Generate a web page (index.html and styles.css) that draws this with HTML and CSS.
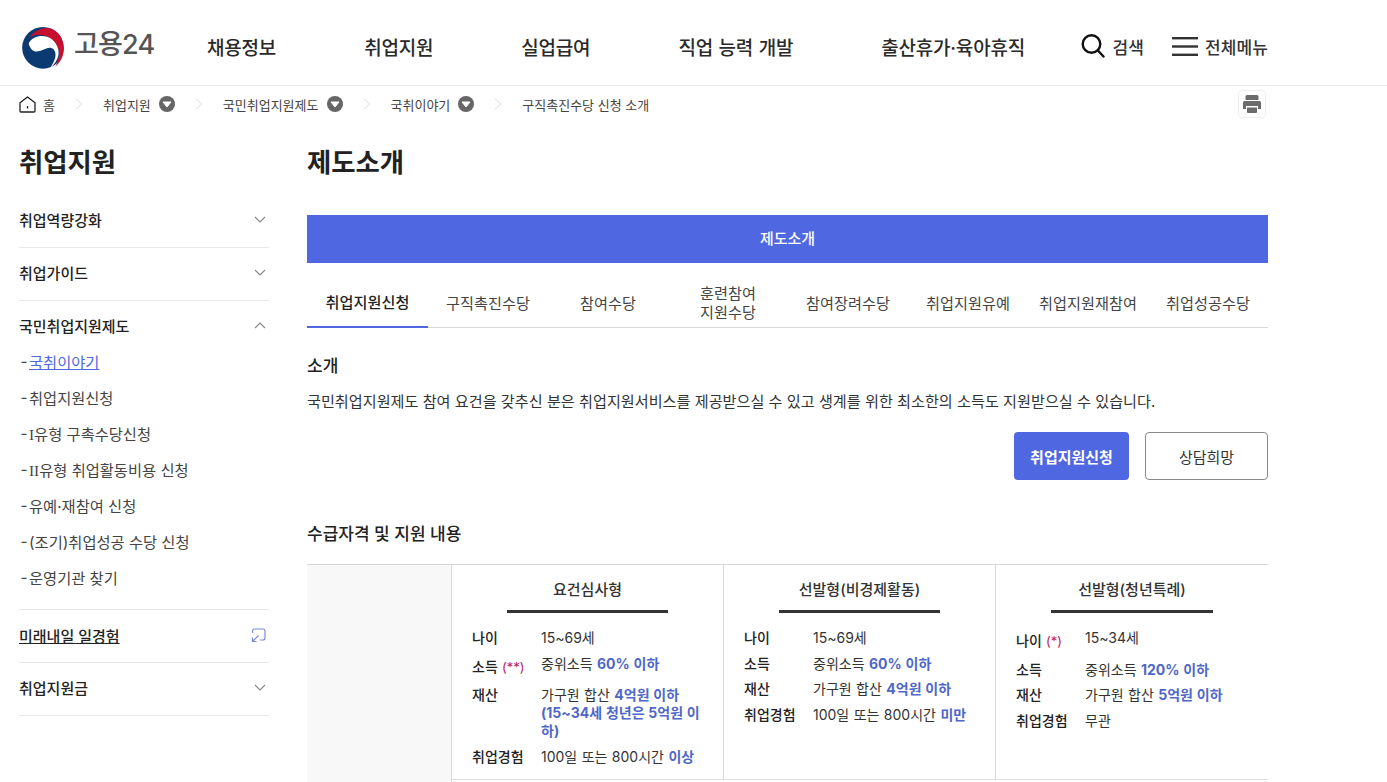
FILE: index.html
```html
<!DOCTYPE html>
<html lang="ko">
<head>
<meta charset="utf-8">
<title>제도소개 - 고용24</title>
<link rel="stylesheet" href="styles.css">
</head>
<body>
<header class="header">
  <a class="logo">
    <svg class="logo-mark" viewBox="22 23 126 127" width="42" height="42">
      <circle cx="85" cy="86" r="63" fill="#0b3a72"/>
      <path d="M112 26C136 36 148 62 148 88C148 112 134 136 108 148L150 150V26Z" fill="#fff"/>
      <path d="M44 54C62 32 88 23 106 27C132 35 148 60 148 88C148 110 138 130 122 143C134 122 138 100 128 80C114 52 75 36 44 54Z" fill="#c8102e"/>
      <path d="M42 72C55 48 90 44 112 60C130 75 138 100 128 120C122 132 116 140 107 146C122 125 128 105 118 92C108 80 95 88 85 92C72 98 58 100 50 90C46 84 42 78 42 72Z" fill="#fff"/>
    </svg>
    <span class="logo-text">고용24</span>
  </a>
  <nav class="gnb">
    <a>채용정보</a><a>취업지원</a><a>실업급여</a><a>직업 능력 개발</a><a>출산휴가·육아휴직</a>
  </nav>
  <div class="util">
    <a class="util-link search-link">
      <svg width="24" height="24" viewBox="0 0 24 24" fill="none" stroke="#111" stroke-width="2.400"><circle cx="10.500" cy="10" r="8.800"/><path d="M17 16.500L22.500 22.500" stroke-linecap="round"/></svg>
      <span>검색</span>
    </a>
    <a class="util-link menu-link">
      <svg width="26" height="19" viewBox="0 0 26 19" fill="#333"><rect y="0" width="26" height="2.400"/><rect y="8.300" width="26" height="2.400"/><rect y="16.600" width="26" height="2.400"/></svg>
      <span>전체메뉴</span>
    </a>
  </div>
</header>

<div class="crumbs">
  <svg class="home" width="17" height="17" viewBox="0 0 17 17" fill="none" stroke="#222" stroke-width="1.300"><path d="M1 6.800L8.500 1L16 6.800V15a1 1 0 0 1-1 1H2a1 1 0 0 1-1-1Z" stroke-linejoin="round"/><path d="M8.500 10v2.500"/></svg>
  <span class="crumb home-label">홈</span>
  <svg class="sep" width="8" height="12" viewBox="0 0 8 12" fill="none" stroke="#ddd"><path d="M1 1l6 5-6 5"/></svg>
  <span class="crumb">취업지원</span>
  <svg class="drop" width="16" height="16" viewBox="0 0 16 16"><circle cx="8" cy="8" r="8" fill="#666"/><path d="M4 6h8l-4 5z" fill="#fff" stroke="#fff" stroke-linejoin="round"/></svg>
  <svg class="sep" width="8" height="12" viewBox="0 0 8 12" fill="none" stroke="#ddd"><path d="M1 1l6 5-6 5"/></svg>
  <span class="crumb">국민취업지원제도</span>
  <svg class="drop" width="16" height="16" viewBox="0 0 16 16"><circle cx="8" cy="8" r="8" fill="#666"/><path d="M4 6h8l-4 5z" fill="#fff" stroke="#fff" stroke-linejoin="round"/></svg>
  <svg class="sep" width="8" height="12" viewBox="0 0 8 12" fill="none" stroke="#ddd"><path d="M1 1l6 5-6 5"/></svg>
  <span class="crumb">국취이야기</span>
  <svg class="drop" width="16" height="16" viewBox="0 0 16 16"><circle cx="8" cy="8" r="8" fill="#666"/><path d="M4 6h8l-4 5z" fill="#fff" stroke="#fff" stroke-linejoin="round"/></svg>
  <svg class="sep" width="8" height="12" viewBox="0 0 8 12" fill="none" stroke="#ddd"><path d="M1 1l6 5-6 5"/></svg>
  <span class="crumb">구직촉진수당 신청 소개</span>
  <button class="print" aria-label="인쇄">
    <svg width="20" height="20" viewBox="0 0 20 20" fill="#6b6b6b"><path d="M5 1h10a1.500 1.500 0 0 1 1.500 1.500V6h-13V2.500A1.500 1.500 0 0 1 5 1Z"/><path d="M2.500 7h15A1.500 1.500 0 0 1 19 8.500V15h-3v-3H4v3H1V8.500A1.500 1.500 0 0 1 2.500 7Z"/><path d="M5 13.500h10V18a1 1 0 0 1-1 1H6a1 1 0 0 1-1-1Z"/></svg>
  </button>
</div>

<div class="layout">
  <aside class="side">
    <h2 class="side-title">취업지원</h2>
    <div class="side-group"><b>취업역량강화</b><svg class="chev" width="12" height="7" viewBox="0 0 12 7" fill="none" stroke="#888" stroke-width="1.200"><path d="M1 1l5 5 5-5"/></svg></div>
    <div class="side-group"><b>취업가이드</b><svg class="chev" width="12" height="7" viewBox="0 0 12 7" fill="none" stroke="#888" stroke-width="1.200"><path d="M1 1l5 5 5-5"/></svg></div>
    <div class="side-open">
      <div class="side-group plain"><b>국민취업지원제도</b><svg class="chev" width="12" height="7" viewBox="0 0 12 7" fill="none" stroke="#888" stroke-width="1.200"><path d="M1 6l5-5 5 5"/></svg></div>
      <ul class="sub">
        <li><a class="current">국취이야기</a></li>
        <li><a>취업지원신청</a></li>
        <li><a><span class="numeral">I</span>유형 구촉수당신청</a></li>
        <li><a><span class="numeral">II</span>유형 취업활동비용 신청</a></li>
        <li><a>유예·재참여 신청</a></li>
        <li><a>(조기)취업성공 수당 신청</a></li>
        <li><a>운영기관 찾기</a></li>
      </ul>
    </div>
    <div class="side-group low"><b class="ul">미래내일 일경험</b><svg class="ext" width="15" height="15" viewBox="0 0 15 15" fill="none" stroke="#7f88d8" stroke-width="1.200"><path d="M1.500 5V3a2 2 0 0 1 2-2h8.500a2 2 0 0 1 2 2v7a2 2 0 0 1-2 2H9"/><path d="M7.500 7.500L1.500 13.500M1.500 9.500v4h4"/></svg></div>
    <div class="side-group last"><b>취업지원금</b><svg class="chev" width="12" height="7" viewBox="0 0 12 7" fill="none" stroke="#888" stroke-width="1.200"><path d="M1 1l5 5 5-5"/></svg></div>
  </aside>

  <main class="main">
    <h1 class="page-title">제도소개</h1>
    <div class="banner">제도소개</div>
    <div class="tabs">
      <a class="tab active">취업지원신청</a>
      <a class="tab">구직촉진수당</a>
      <a class="tab">참여수당</a>
      <a class="tab">훈련참여<br>지원수당</a>
      <a class="tab">참여장려수당</a>
      <a class="tab">취업지원유예</a>
      <a class="tab">취업지원재참여</a>
      <a class="tab">취업성공수당</a>
    </div>
    <h3 class="sec-title intro">소개</h3>
    <p class="lead">국민취업지원제도 참여 요건을 갖추신 분은 취업지원서비스를 제공받으실 수 있고 생계를 위한 최소한의 소득도 지원받으실 수 있습니다.</p>
    <div class="actions">
      <a class="btn primary">취업지원신청</a>
      <a class="btn outline">상담희망</a>
    </div>
    <h3 class="sec-title qualify">수급자격 및 지원 내용</h3>
    <div class="table">
      <div class="cell blank"></div>
      <div class="cell">
        <div class="col-head">요건심사형</div>
        <dl class="facts">
          <dt>나이</dt><dd>15~69세</dd>
          <dt class="tall">소득 <em>(**)</em></dt><dd>중위소득 <strong>60% 이하</strong></dd>
          <dt>재산</dt><dd>가구원 합산 <strong>4억원 이하<br>(15~34세 청년은 5억원 이하)</strong></dd>
          <dt>취업경험</dt><dd>100일 또는 800시간 <strong>이상</strong></dd>
        </dl>
      </div>
      <div class="cell">
        <div class="col-head">선발형(비경제활동)</div>
        <dl class="facts">
          <dt>나이</dt><dd>15~69세</dd>
          <dt>소득</dt><dd>중위소득 <strong>60% 이하</strong></dd>
          <dt>재산</dt><dd>가구원 합산 <strong>4억원 이하</strong></dd>
          <dt>취업경험</dt><dd>100일 또는 800시간 <strong>미만</strong></dd>
        </dl>
      </div>
      <div class="cell">
        <div class="col-head">선발형(청년특례)</div>
        <dl class="facts">
          <dt class="tall">나이 <em>(*)</em></dt><dd>15~34세</dd>
          <dt>소득</dt><dd>중위소득 <strong>120% 이하</strong></dd>
          <dt>재산</dt><dd>가구원 합산 <strong>5억원 이하</strong></dd>
          <dt>취업경험</dt><dd>무관</dd>
        </dl>
      </div>
    </div>
  </main>
</div>
</body>
</html>
```

FILE: styles.css
```css
* { box-sizing: border-box; }
html, body { margin: 0; height: 782px; overflow: hidden; background: #fff; }
body { font-family: Inter, "Noto Sans CJK KR", "Noto Sans", sans-serif; color: #222; font-size: 14px; }
a { color: inherit; text-decoration: none; }

.header { height: 86px; border-bottom: 1px solid #e8e8e8; padding: 7px 119px 0 22px; display: flex; align-items: center; }
.logo { display: flex; align-items: center; gap: 10px; width: 185px; }
.logo-mark { display: block; margin-top: 4px; }
.logo-text { font-size: 27px; font-weight: 500; color: #555; letter-spacing: -0.8px; line-height: 1; margin-bottom: 4px; }
.gnb { display: flex; gap: 88px; font-size: 19px; font-weight: 500; color: #2a2a2a; letter-spacing: -0.2px; word-spacing: 0.7px; }
.util { margin-left: auto; display: flex; align-items: center; gap: 28px; }
.util-link { display: flex; align-items: center; font-size: 17px; font-weight: 500; color: #333; letter-spacing: 0.1px; }
.search-link { gap: 8px; }
.menu-link { gap: 7px; }

.crumbs { height: 38px; display: flex; align-items: center; padding: 0 121px 2px 19px; font-size: 13px; color: #444; }
.home { margin-right: 7px; }
.crumb { white-space: nowrap; }
.sep { margin: 0 20px; }
.drop { margin-left: 8px; }
.print { margin-left: auto; width: 28px; height: 28px; padding: 0; display: flex; align-items: center; justify-content: center; background: #fff; border: 1px solid #eee; border-radius: 4px; }

.layout { display: flex; padding: 0 119px 0 19px; gap: 38px; }
.side { width: 250px; flex: none; }
.side-title { margin: 14px 0 9px; font-size: 26.400px; font-weight: 700; line-height: 48px; color: #222; height: 48px; }
.side-group { height: 53px; padding: 0 3px 4px 0; display: flex; align-items: center; justify-content: space-between; border-bottom: 1px solid #e8e8e8; font-size: 15px; }
.side-group.low { padding-bottom: 2px; }
.side-group.last { padding-bottom: 4px; }
.side-group b { font-weight: 500; color: #222; }
.side-group .ul { text-decoration: underline; }
.side-group.plain { border-bottom: 0; }
.side-open { border-bottom: 1px solid #e8e8e8; padding-bottom: 14px; }
.sub { list-style: none; margin: -11px 0 0; padding: 0; font-size: 15.300px; color: #444; }
.sub li { height: 36px; display: flex; align-items: center; }
.sub li::before { content: "-"; width: 10px; text-align: center; }
.sub .current { color: #4f67e0; text-decoration: underline; }
.numeral { font-family: "Liberation Serif", serif; }

.main { width: 961px; flex: none; }
.page-title { margin: 14px 0 0; height: 48px; line-height: 48px; font-size: 26.400px; font-weight: 700; color: #222; }
.banner { margin-top: 29px; height: 48px; padding-bottom: 3px; background: #4f67e0; color: #fff; font-size: 15px; font-weight: 500; display: flex; align-items: center; justify-content: center; }
.tabs { display: grid; grid-template-columns: 121px repeat(7, 1fr); border-bottom: 1px solid #d8d8d8; height: 65px; }
.tab { display: flex; align-items: center; justify-content: center; text-align: center; font-size: 15.200px; line-height: 19px; color: #444; padding-top: 15px; height: 65px; }
.tab.active { color: #222; font-weight: 500; border-bottom: 2px solid #4f67e0; }
.sec-title { margin: 0; font-size: 17px; font-weight: 500; color: #222; line-height: 24px; }
.sec-title.intro { margin-top: 26px; }
.lead { margin: 12px 0 0; font-size: 15.150px; line-height: 24px; color: #333; }
.actions { display: flex; justify-content: flex-end; gap: 16px; margin-top: 18px; }
.btn { height: 48px; display: flex; align-items: center; justify-content: center; border-radius: 4px; font-size: 15px; }
.btn.primary { width: 115px; background: #4f67e0; color: #fff; font-weight: 700; }
.btn.outline { width: 123px; border: 1px solid #888; color: #333; }
.sec-title.qualify { margin-top: 42px; }

.table { margin-top: 18px; display: grid; grid-template-columns: 145px 272px 272px 272px; align-items: start; border-top: 1px solid #d8d8d8; }
.cell { height: 215px; border-right: 1px solid #d8d8e0; border-bottom: 1px solid #dde; padding: 0 20px; }
.cell:last-child { border-right: 0; }
.cell.blank { height: 240px; background: #f8f8f8; border-bottom: 0; }
.col-head { margin: 12px 35px 0; height: 36px; text-align: center; font-size: 15px; font-weight: 500; color: #333; line-height: 26px; border-bottom: 3px solid #333; white-space: nowrap; }
.facts { margin: 16px 0 0; display: grid; grid-template-columns: 69px 1fr; row-gap: 7.500px; font-size: 14px; line-height: 18px; color: #333; word-spacing: 0.5px; }
.facts dt { font-weight: 500; color: #222; }
.facts dt.tall { line-height: 24px; }
.facts dd { margin: 0; }
.facts strong { color: #4f67c8; font-weight: 700; }
.facts em { font-style: normal; font-weight: 400; color: #c2185b; font-size: 13px; }
```
